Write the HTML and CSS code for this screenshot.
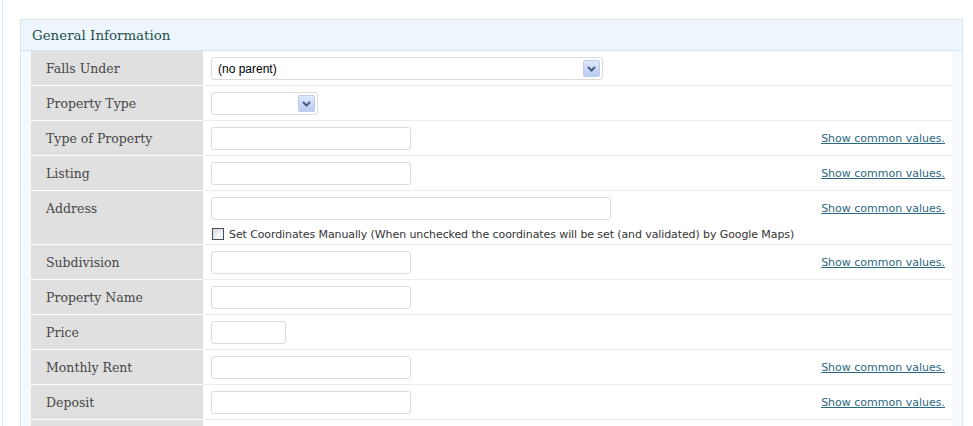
FILE: index.html
```html
<!DOCTYPE html>
<html lang="en">
<head>
  <meta charset="UTF-8">
  <title>General Information</title>
  <link rel="stylesheet" href="styles.css">
</head>
<body>
  <div class="page">
    <div class="postbox">
      <h3 class="boxTitle">General Information</h3>
      <div class="inside">
        <table class="formTable">
          <tr>
            <th>Falls Under</th>
            <td>
              <span class="selectWrap">
                <select class="field selectWide"><option>(no parent)</option></select>
                <span class="selectArrow"><svg width="9" height="6" viewBox="0 0 9 6"><path d="M1 1l3.5 3.5L8 1" fill="none" stroke="#4a5c80" stroke-width="2"/></svg></span>
              </span>
            </td>
            <td class="linkCell"></td>
          </tr>
          <tr>
            <th>Property Type</th>
            <td>
              <span class="selectWrap">
                <select class="field selectSmall"><option></option></select>
                <span class="selectArrow"><svg width="9" height="6" viewBox="0 0 9 6"><path d="M1 1l3.5 3.5L8 1" fill="none" stroke="#4a5c80" stroke-width="2"/></svg></span>
              </span>
            </td>
            <td class="linkCell"></td>
          </tr>
          <tr>
            <th>Type of Property</th>
            <td><input class="field" type="text"></td>
            <td class="linkCell"><a href="#">Show common values.</a></td>
          </tr>
          <tr>
            <th>Listing</th>
            <td><input class="field" type="text"></td>
            <td class="linkCell"><a href="#">Show common values.</a></td>
          </tr>
          <tr>
            <th>Address</th>
            <td>
              <input class="field fieldLong" type="text">
              <label class="checkLine"><input class="check" type="checkbox"> Set Coordinates Manually (When unchecked the coordinates will be set (and validated) by Google Maps)</label>
            </td>
            <td class="linkCell"><a href="#">Show common values.</a></td>
          </tr>
          <tr>
            <th>Subdivision</th>
            <td><input class="field" type="text"></td>
            <td class="linkCell"><a href="#">Show common values.</a></td>
          </tr>
          <tr>
            <th>Property Name</th>
            <td><input class="field" type="text"></td>
            <td class="linkCell"></td>
          </tr>
          <tr>
            <th>Price</th>
            <td><input class="field fieldShort" type="text"></td>
            <td class="linkCell"></td>
          </tr>
          <tr>
            <th>Monthly Rent</th>
            <td><input class="field" type="text"></td>
            <td class="linkCell"><a href="#">Show common values.</a></td>
          </tr>
          <tr>
            <th>Deposit</th>
            <td><input class="field" type="text"></td>
            <td class="linkCell"><a href="#">Show common values.</a></td>
          </tr>
          <tr>
            <th></th>
            <td><input class="field" type="text"></td>
            <td class="linkCell"></td>
          </tr>
        </table>
      </div>
    </div>
  </div>
</body>
</html>
```

FILE: styles.css
```css
html, body{
  margin: 0;
  padding: 0;
  background-color: #ffffff;
  height: 426px;
  overflow: hidden;
}
.page{
  margin-left: 2px;
  border-left: 1px solid #d9e7f1;
  padding: 19px 10px 0 17px;
  min-height: 426px;
  box-sizing: border-box;
}
.postbox{
  width: 943px;
  box-sizing: border-box;
  border: 1px solid #d6e6f2;
  border-bottom: none;
  background-color: #f6fafd;
}
.boxTitle{
  margin: 0;
  height: 31px;
  padding: 7px 0 0 11px;
  box-sizing: border-box;
  background-color: #eef6fc;
  border-bottom: 1px solid #d3e3ef;
  font-family: "DejaVu Serif", serif;
  font-weight: normal;
  font-size: 13.4px;
  line-height: 18px;
  color: #22504e;
}
.inside{
  padding: 0 10px;
}
.formTable{
  width: 100%;
  border-collapse: collapse;
  border-spacing: 0;
  background-color: #ffffff;
}
.formTable th{
  width: 157px;
  height: 17px;
  padding: 9px 0 8px 15px;
  background-color: #e0e0e0;
  border-bottom: 1px solid #ffffff;
  text-align: left;
  vertical-align: top;
  font-family: "DejaVu Serif", serif;
  font-weight: normal;
  font-size: 12.5px;
  line-height: 17px;
  color: #464646;
}
.formTable td{
  padding: 6px 0 5px 8px;
  border-bottom: 1px solid #ececec;
  vertical-align: top;
}
.formTable td.linkCell{
  padding-right: 7px;
  text-align: right;
  white-space: nowrap;
}
.linkCell a{
  font-family: "DejaVu Sans", sans-serif;
  font-size: 11px;
  line-height: 23px;
  color: #2c6880;
  text-decoration: underline;
}
.field{
  display: block;
  width: 200px;
  height: 23px;
  margin: 0;
  padding: 0 6px;
  box-sizing: border-box;
  border: 1px solid #dcdcdc;
  border-radius: 3px;
  background-color: #ffffff;
  font-family: "Liberation Sans", sans-serif;
  font-size: 12px;
  color: #000000;
}
.fieldLong{
  width: 400px;
}
.fieldShort{
  width: 75px;
}
.selectWrap{
  position: relative;
  display: inline-block;
  vertical-align: top;
}
select.field{
  -webkit-appearance: none;
  appearance: none;
}
.selectWide{
  width: 392px;
}
.selectSmall{
  width: 107px;
}
.selectArrow{
  position: absolute;
  top: 3px;
  right: 3px;
  width: 17px;
  height: 17px;
  box-sizing: border-box;
  border: 1px solid #bccbee;
  border-radius: 2px;
  background: linear-gradient(#dfe8fb, #b8cbf2);
  display: flex;
  align-items: center;
  justify-content: center;
}
.checkLine{
  display: flex;
  align-items: center;
  margin-top: 7px;
  height: 14px;
  margin-bottom: -2px;
  font-family: "DejaVu Sans", sans-serif;
  font-size: 11px;
  letter-spacing: -0.1px;
  color: #333333;
  white-space: nowrap;
}
.check{
  -webkit-appearance: none;
  appearance: none;
  width: 12px;
  height: 12px;
  margin: 0 5px 0 1px;
  border: 1px solid #3e4f60;
  background: linear-gradient(135deg, #dcdcdc, #ffffff);
}
```
